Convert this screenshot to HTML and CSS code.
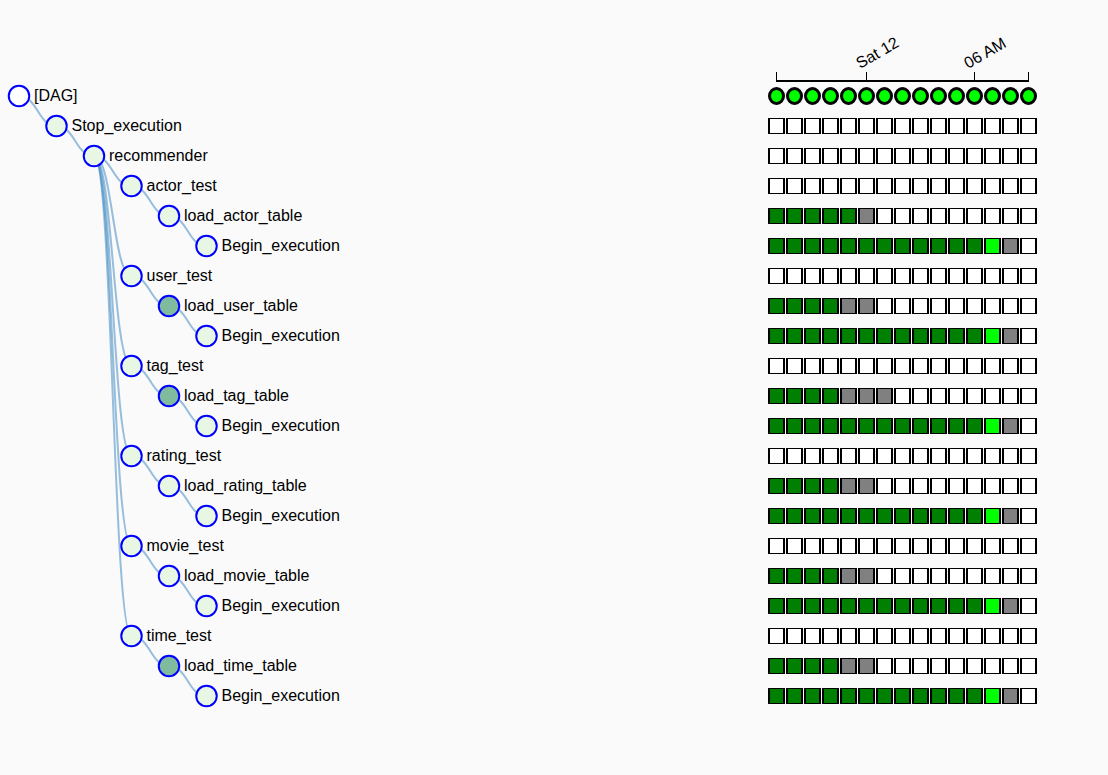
FILE: index.html
```html
<!DOCTYPE html>
<html lang="en">
<head>
<meta charset="utf-8">
<title>DAG tree view</title>
<link rel="stylesheet" href="styles.css">
</head>
<body>
<main class="view">
  <svg class="tree" id="tree" role="img" aria-label="Task tree"></svg>
  <section class="runs" aria-label="Task runs">
    <svg class="axis" width="270" height="81">
      <path class="axis-line" d="M8 81H261"></path>
      <path class="axis-tick" d="M8.500 72V81M98.500 72V81M206.500 72V81M260.500 72V81"></path>
      <text class="axis-label" transform="translate(92 69) rotate(-30)">Sat 12</text>
      <text class="axis-label" transform="translate(200 69) rotate(-30)">06 AM</text>
    </svg>
    <div id="rows"></div>
  </section>
</main>
<script src="script.js"></script>
</body>
</html>
```
FILE: styles.css
```css
body {
  margin: 0;
  background: #fafafa;
  color: #000;
  font-family: "Liberation Sans", Arial, sans-serif;
  font-size: 16px;
}

.view {
  display: flex;
  min-height: 100vh;
  padding-right: 70px;
}

.tree {
  flex: 1;
  min-width: 360px;
  height: 720px;
}

.link {
  fill: none;
  stroke: #3182bd;
  stroke-width: 2px;
  opacity: 0.5;
}

.node {
  fill: #e8f7e4;
  stroke: #00f;
  stroke-width: 2px;
}

.node-root {
  fill: #fff;
}

.node-repeat {
  fill: #80bba0;
}

.axis {
  display: block;
  overflow: visible;
}

.axis-line {
  stroke: #000;
  stroke-width: 2px;
}

.axis-tick {
  stroke: #000;
  stroke-width: 1px;
}

.row {
  display: grid;
  grid-template-columns: repeat(15, 18px);
  align-items: center;
  height: 30px;
}

.task {
  box-sizing: border-box;
  width: 17px;
  height: 16px;
  border: solid #000;
  border-width: 1px 2px;
  background: #fff;
}

.run {
  box-sizing: border-box;
  width: 17px;
  height: 18px;
  border: 3px solid #000;
  border-radius: 50%;
}

.success {
  background: #008000;
}

.running {
  background: #0f0;
}

.queued {
  background: #808080;
}
```
FILE: script.js
```js
const BEGIN = [5, "Begin_execution", "", "ssssssssssssrq."];
const TASKS = [
  [0, "[DAG]", "node-root", "rrrrrrrrrrrrrrr"],
  [1, "Stop_execution", "", ""],
  [2, "recommender", "", ""],
  [3, "actor_test", "", ""],
  [4, "load_actor_table", "", "sssssq"],
  BEGIN,
  [3, "user_test", "", ""],
  [4, "load_user_table", "node-repeat", "ssssqq"],
  BEGIN,
  [3, "tag_test", "", ""],
  [4, "load_tag_table", "node-repeat", "ssssqqq"],
  BEGIN,
  [3, "rating_test", "", ""],
  [4, "load_rating_table", "", "ssssqq"],
  BEGIN,
  [3, "movie_test", "", ""],
  [4, "load_movie_table", "", "ssssqq"],
  BEGIN,
  [3, "time_test", "", ""],
  [4, "load_time_table", "node-repeat", "ssssqq"],
  BEGIN
];
const STATES = { s: "success", r: "running", q: "queued" };
const RUNS = 15;

const parents = [];
let links = "";
let nodes = "";
let rows = "";

TASKS.forEach(([depth, name, kind, states], index) => {
  const x = 19 + depth * 37.5;
  const y = 96 + index * 30;
  if (depth > 0) {
    const from = parents[depth - 1];
    const mid = (from.x + x) / 2;
    links += `<path class="link" d="M${from.x} ${from.y}C${mid} ${from.y} ${mid} ${y} ${x} ${y}"/>`;
  }
  parents[depth] = { x, y };
  nodes += `<circle class="node ${kind}" cx="${x}" cy="${y}" r="10.25"/>`;
  nodes += `<text x="${x + 15}" y="${y + 5}">${name}</text>`;

  let cells = "";
  for (let i = 0; i < RUNS; i++) {
    cells += `<span class="${depth ? "task" : "run"} ${STATES[states[i]] || ""}"></span>`;
  }
  rows += `<div class="row">${cells}</div>`;
});

document.getElementById("tree").innerHTML = links + nodes;
document.getElementById("rows").innerHTML = rows;
```
